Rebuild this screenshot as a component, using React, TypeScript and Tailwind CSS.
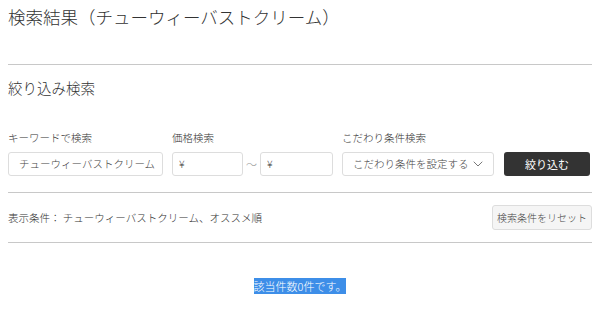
import React from "react";
import { ChevronDown } from "lucide-react";

export default function App() {
  return (
    <div
      className="px-2 text-[#333] bg-white min-h-[330px] font-light"
      style={{ fontFamily: '"Noto Sans CJK JP", "Noto Sans", sans-serif' }}
    >
      <h1 className="pt-[4px] text-[17.5px] leading-[26px] font-light">
        検索結果（チューウィーバストクリーム）
      </h1>
      <hr className="mt-[34px] border-0 border-t border-[#c8c8c8]" />
      <h2 className="mt-[13px] text-[14.5px] leading-[20px] font-light">絞り込み検索</h2>

      <div className="mt-[32px] flex items-end">
        <div className="w-[155px] flex flex-col">
          <label className="text-[10.5px] leading-[16px] mb-[6px]">キーワードで検索</label>
          <div className="h-[24px] border border-[#ddd] rounded-[3px] pl-[10px] flex items-center text-[10.5px] text-[#444] whitespace-nowrap overflow-hidden">
            チューウィーバストクリーム
          </div>
        </div>
        <div className="ml-[9px] flex flex-col">
          <label className="text-[10.5px] leading-[16px] mb-[6px]">価格検索</label>
          <div className="flex items-center">
            <div className="w-[71px] h-[24px] border border-[#ddd] rounded-[3px] pl-[6px] flex items-center text-[10.5px] text-[#444]">
              ¥
            </div>
            <div className="w-[17px] text-center text-[11px] text-[#999]">～</div>
            <div className="w-[73px] h-[24px] border border-[#ddd] rounded-[3px] pl-[6px] flex items-center text-[10.5px] text-[#444]">
              ¥
            </div>
          </div>
        </div>
        <div className="ml-[9px] flex flex-col">
          <label className="text-[10.5px] leading-[16px] mb-[6px]">こだわり条件検索</label>
          <div className="w-[152px] h-[24px] border border-[#ddd] rounded-[3px] pl-[10px] pr-[7px] flex items-center justify-between text-[10.5px] text-[#444]">
            <span className="whitespace-nowrap">こだわり条件を設定する</span>
            <ChevronDown size={16} strokeWidth={1.2} className="text-[#555]" />
          </div>
        </div>
        <button className="ml-[10px] w-[86px] h-[24px] rounded-[3px] bg-[#333] text-white text-[11px] font-normal flex items-center justify-center">
          絞り込む
        </button>
      </div>

      <hr className="mt-[16px] border-0 border-t border-[#c8c8c8]" />
      <div className="flex items-center justify-between pt-[12px] pb-[12px]">
        <div className="text-[10.5px] text-[#333]">表示条件： チューウィーバストクリーム、オススメ順</div>
        <button className="w-[100px] h-[25px] bg-[#f5f5f5] border border-[#ddd] rounded-[3px] text-[10px] text-[#444] flex items-center justify-center">
          検索条件をリセット
        </button>
      </div>
      <hr className="border-0 border-t border-[#c8c8c8]" />
      <div className="mt-[35px] flex justify-center">
        <span className="bg-[#3d8ee8] text-white text-[11px] leading-[16px]">
          該当件数0件です。
        </span>
      </div>
    </div>
  );
}
